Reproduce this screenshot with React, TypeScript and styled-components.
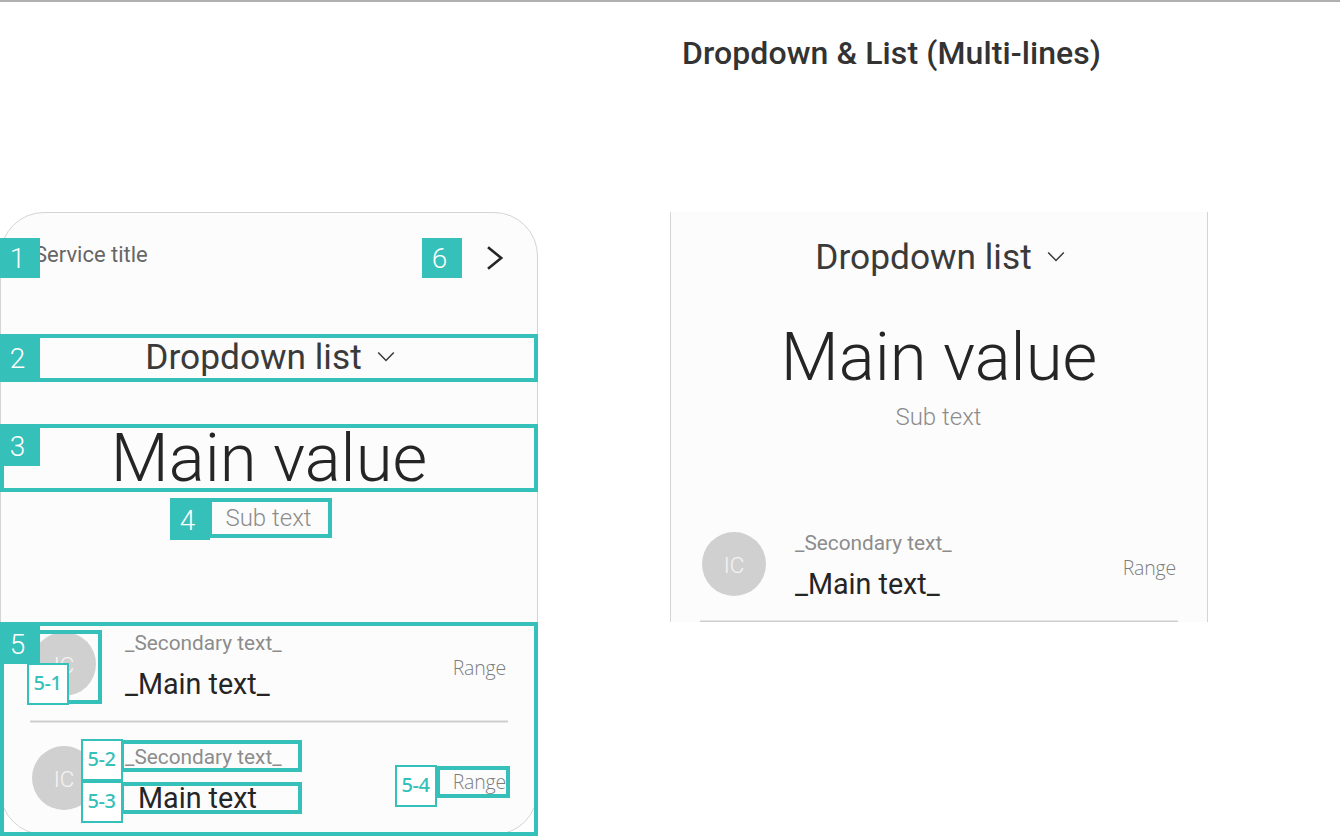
import React from "react";
import styled, { createGlobalStyle } from "styled-components";

const TEAL = "#35c0b9";

const GlobalStyle = createGlobalStyle`
  * { box-sizing: border-box; }
  body { margin: 0; background: #fff; overflow: hidden; }
`;

const Page = styled.main`
  width: 1340px;
  height: 836px;
  overflow: hidden;
  border-top: 2px solid #b0b0b0;
  font-family: Roboto, sans-serif;
`;

const TitleBar = styled.header`
  display: flex;
  height: 210px;
  padding: 29px 0 0 682px;
`;

const Title = styled.h1`
  margin: 0;
  font: 500 32px/44px Roboto, sans-serif;
  letter-spacing: 0.1px;
  color: #333;
  white-space: nowrap;
`;

const Columns = styled.div`
  display: flex;
  align-items: flex-start;
  gap: 132px;
`;

const Column = styled.section`
  position: relative;
  width: 538px;
`;

const Card = styled.article<{ $cropped?: boolean }>`
  display: flex;
  flex-direction: column;
  width: 538px;
  height: ${(p) => (p.$cropped ? 410 : 623)}px;
  overflow: hidden;
  background: #fcfcfc;
  border: 1px solid #d4d4d4;
  border-width: ${(p) => (p.$cropped ? "0 1px" : "1px")};
  border-radius: ${(p) => (p.$cropped ? 0 : 44)}px;
`;

const CardHeader = styled.div`
  display: flex;
  flex: none;
  justify-content: space-between;
  height: 121px;
  padding: 27px 33px 0 33px;
`;

const ServiceTitle = styled.span`
  font-size: 22px;
  line-height: 30px;
  color: #666;
`;

const NextIcon = styled.svg`
  width: 18px;
  height: 26px;
  margin-top: 5px;
`;

const Dropdown = styled.div<{ $top?: number }>`
  display: flex;
  flex: none;
  align-items: center;
  justify-content: center;
  gap: 15px;
  height: 48px;
  margin-top: ${(p) => p.$top ?? 0}px;
  padding: 0 0 2px 2px;
  font-size: 35.3px;
  line-height: 46px;
  color: #3a3a3a;
`;

const DownIcon = styled.svg`
  width: 18px;
  height: 12px;
`;

const MainValue = styled.div<{ $gap: number }>`
  flex: none;
  height: 68px;
  margin-top: ${(p) => p.$gap}px;
  font-size: 67px;
  font-weight: 300;
  line-height: 69px;
  text-align: center;
  color: #252525;
`;

const SubText = styled.div`
  flex: none;
  height: 40px;
  margin-top: 6px;
  padding-right: 1px;
  font-size: 24px;
  font-weight: 300;
  line-height: 40px;
  text-align: center;
  color: #8c8c8c;
`;

const List = styled.div<{ $gap: number }>`
  flex: none;
  margin: ${(p) => p.$gap}px 29px 0;
`;

const Row = styled.div`
  display: flex;
  align-items: center;
  height: 112px;
  padding: 0 2px;
`;

const Divider = styled.hr`
  height: 3px;
  margin: 0 0 -1px;
  border: solid #e6e6e6;
  border-width: 1px 0;
  background: #cdcdcd;
`;

const Avatar = styled.span`
  display: grid;
  place-items: center;
  flex: none;
  width: 64px;
  height: 64px;
  margin-top: 0.6px;
  border-radius: 50%;
  background: #d0d0d0;
  color: #f4f4f4;
  font-size: 22.5px;
  font-weight: 300;
  line-height: 30px;
  padding-top: 1px;
`;

const RowTexts = styled.div`
  display: flex;
  flex: 1;
  flex-direction: column;
  margin-left: 29px;
  padding-top: 6px;
`;

const Secondary = styled.span`
  font-size: 20.8px;
  line-height: 34px;
  color: #8c8c8c;
`;

const Primary = styled.span<{ $indent?: boolean }>`
  padding-left: ${(p) => (p.$indent ? 13 : 0)}px;
  font-size: 28.7px;
  line-height: 48px;
  color: #252525;
`;

const Range = styled.span`
  padding-top: 7px;
  font: 300 19.5px/28px "Open Sans", sans-serif;
  letter-spacing: -0.2px;
  color: #7c7c7c;
`;

type Place = { $x: number; $y: number; $w?: number; $h?: number };

/* Callouts lie over the card, so they are placed freely. */
const Outline = styled.span<Place>`
  position: absolute;
  left: ${(p) => p.$x}px;
  top: ${(p) => p.$y}px;
  width: ${(p) => p.$w}px;
  height: ${(p) => p.$h}px;
  border: 4px solid ${TEAL};
`;

const Badge = styled.span<Place>`
  position: absolute;
  left: ${(p) => p.$x}px;
  top: ${(p) => p.$y}px;
  width: 40px;
  height: ${(p) => p.$h ?? 40}px;
  padding-right: 5px;
  background: ${TEAL};
  color: #fff;
  font: 300 28px Roboto, sans-serif;
  line-height: ${(p) => (p.$h ? 45 : 41)}px;
  text-align: center;
`;

const SubBadge = styled.span<Place>`
  position: absolute;
  left: ${(p) => p.$x}px;
  top: ${(p) => p.$y}px;
  width: 42px;
  height: 42px;
  padding-right: 1px;
  background: #fff;
  border: 2px solid ${TEAL};
  color: ${TEAL};
  font: 500 20px/36px "Noto Sans", sans-serif;
  letter-spacing: -0.4px;
  text-align: center;
`;

function Hero({ top, valueGap }: { top?: number; valueGap: number }) {
  return (
    <>
      <Dropdown $top={top}>
        Dropdown list
        <DownIcon viewBox="0 0 18 12" fill="none" stroke="#3a3a3a" strokeWidth="1.5">
          <path d="M1.2 1.5 9 9.5 16.8 1.5" />
        </DownIcon>
      </Dropdown>
      <MainValue $gap={valueGap}>Main value</MainValue>
      <SubText>Sub text</SubText>
    </>
  );
}

function Item({ text, indent }: { text: string; indent?: boolean }) {
  return (
    <Row>
      <Avatar>IC</Avatar>
      <RowTexts>
        <Secondary>_Secondary text_</Secondary>
        <Primary $indent={indent}>{text}</Primary>
      </RowTexts>
      <Range>Range</Range>
    </Row>
  );
}

export default function App() {
  return (
    <Page>
      <GlobalStyle />
      <TitleBar>
        <Title>Dropdown &amp; List (Multi-lines)</Title>
      </TitleBar>
      <Columns>
        <Column>
          <Card>
            <CardHeader>
              <ServiceTitle>Service title</ServiceTitle>
              <NextIcon viewBox="0 0 18 26" fill="none" stroke="#252525" strokeWidth="2.6">
                <path d="M2 2.2 15.2 13 2 23.8" />
              </NextIcon>
            </CardHeader>
            <Hero valueGap={42} />
            <List $gap={70}>
              <Item text="_Main text_" />
              <Divider />
              <Item text="Main text" indent />
            </List>
          </Card>
          <Outline $x={0} $y={122} $w={538} $h={48} />
          <Outline $x={0} $y={212} $w={538} $h={68} />
          <Outline $x={208} $y={286} $w={124} $h={40} />
          <Outline $x={0} $y={410} $w={538} $h={214} />
          <Outline $x={36} $y={418} $w={66} $h={74} />
          <Outline $x={120} $y={528} $w={182} $h={32} />
          <Outline $x={120} $y={570} $w={182} $h={32} />
          <Outline $x={436} $y={554} $w={74} $h={32} />
          <Badge $x={0} $y={26}>1</Badge>
          <Badge $x={0} $y={126}>2</Badge>
          <Badge $x={0} $y={214}>3</Badge>
          <Badge $x={170} $y={286} $h={42}>4</Badge>
          <Badge $x={0} $y={412}>5</Badge>
          <Badge $x={422} $y={26}>6</Badge>
          <SubBadge $x={27} $y={451}>5-1</SubBadge>
          <SubBadge $x={81} $y={527}>5-2</SubBadge>
          <SubBadge $x={81} $y={569}>5-3</SubBadge>
          <SubBadge $x={395} $y={553}>5-4</SubBadge>
        </Column>
        <Column>
          <Card $cropped>
            <Hero top={22} valueGap={41} />
            <List $gap={71}>
              <Item text="_Main text_" />
              <Divider />
            </List>
          </Card>
        </Column>
      </Columns>
    </Page>
  );
}
